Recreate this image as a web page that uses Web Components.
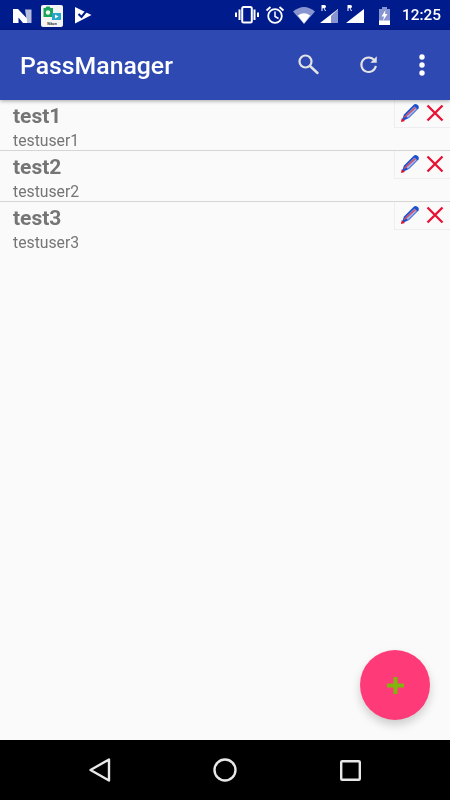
<!DOCTYPE html>
<html><head><meta charset="utf-8">
<style>
html,body{margin:0;padding:0;height:100%}
body{width:450px;height:800px;overflow:hidden;font-family:Roboto,sans-serif}
</style></head><body>
<pm-app>
<pm-status slot="status"></pm-status>
<pm-bar slot="bar" title-text="PassManager"></pm-bar>
<pm-row name="test1" user="testuser1"></pm-row>
<pm-row name="test2" user="testuser2"></pm-row>
<pm-row name="test3" user="testuser3" last></pm-row>
<pm-fab slot="fab"></pm-fab>
<pm-nav slot="nav"></pm-nav>
</pm-app>
<script>
function def(tag,html){
  customElements.define(tag,class extends HTMLElement{
    connectedCallback(){
      if(this.shadowRoot)return;
      const r=this.attachShadow({mode:'open'});
      r.innerHTML=typeof html==='function'?html(this):html;
    }
  });
}
def('pm-app',`<style>
:host{display:flex;flex-direction:column;height:800px;background:#fafafa;position:relative}
.list{flex:1;display:block;position:relative;min-height:0}
.fab{position:absolute;right:20px;bottom:80px;display:block}
</style>
<slot name="status"></slot><slot name="bar"></slot>
<div class="list"><slot></slot></div>
<div class="fab"><slot name="fab"></slot></div>
<slot name="nav"></slot>`);

def('pm-status',`<style>
:host{display:flex;align-items:center;height:30px;background:#001b8b;color:#fff;padding:0 9px 0 13px;font:500 15.400px Roboto,sans-serif;flex:none;box-sizing:border-box}
svg{display:block;flex:none}
.nikon{width:22px;height:22px;margin-left:9px;background:#f4f4f4;border-radius:2px;flex:none;position:relative;overflow:hidden;margin-top:1px}
.nikon span{position:absolute;left:0;right:0;bottom:1px;text-align:center;font:700 3.500px "Liberation Sans",sans-serif;color:#222;line-height:4px}
.sp{flex:1}
.time{margin-left:11px;line-height:30px;will-change:transform}
</style>
<svg width="19" height="16" viewBox="0 0 19 16" style="margin-top:2px"><path d="M12 1.500h6.500V15H14z" fill="#b4bbdd"/><path d="M0 5V1h5L14 10.500V15H10L5.500 9.500V15H0z" fill="#fff"/></svg>
<div class="nikon"><svg width="22" height="22" viewBox="0 0 22 22" style="position:absolute;left:0;top:0"><path d="M2.500 3h2l1-1.500h3l1 1.500h2.500V12h-9.500z" fill="#1aa35a"/><circle cx="7" cy="7.500" r="2.200" fill="#f4f4f4"/><rect x="11" y="8" width="9" height="7" fill="#27a6c9"/><path d="M14 9.500l3.500 2-3.500 2z" fill="#fff"/></svg><span>Nikon</span></div>
<svg style="margin-left:12px" width="17" height="17" viewBox="0 0 17 17" overflow="visible"><path d="M0 0L16.500 8 0 16.500z" fill="#fff"/><path d="M3.500 7l3 3L13.500 1.500" fill="none" stroke="#001b8b" stroke-width="2"/></svg>
<span class="sp"></span>
<svg width="24" height="18" viewBox="0 0 24 18" fill="none" stroke="#fff"><rect x="7.200" y="1" width="9.600" height="15.500" rx="1.500" stroke-width="2"/><path d="M4.500 3.500v10.500M1 6.500v4.500M19.500 3.500v10.500M23 6.500v4.500" stroke-width="2"/></svg>
<svg style="margin-left:6px" width="20" height="20" viewBox="0 0 20 20" fill="none" stroke="#fff"><circle cx="10" cy="11" r="6.800" stroke-width="1.800"/><path d="M10 6.500V11.500l3.500 2" stroke-width="1.500"/><path d="M1.500 5.500L5.500 2M18.500 5.500L14.500 2" stroke-width="1.800"/></svg>
<svg style="margin-left:8px" width="22" height="18" viewBox="0 0 22 18"><path d="M0 5.500Q11-3.500 22 5.500L11 18z" fill="#8794cf"/><path d="M4.800 9.600Q11 4.800 17.200 9.600L11 17.500z" fill="#fff"/></svg>
<span style="flex:none;margin-left:5px;width:18px;height:20px;position:relative;display:block"><svg width="18" height="20" viewBox="0 0 18 20" style="position:absolute;left:0;top:0"><path d="M18 4V18H0z" fill="#fff"/><path d="M18 4V18H11V11z" fill="#8794cf"/><path d="M1.500 0h3q1.500 0 1.500 1.500t-1.500 1.600L6 6H5L3.800 3.300H2.500V6h-1z" fill="#fff"/></svg></span>
<span style="flex:none;margin-left:8px;width:18px;height:20px;position:relative;display:block"><svg width="18" height="20" viewBox="0 0 18 20" style="position:absolute;left:0;top:0"><path d="M18 4V18H0z" fill="#fff"/><path d="M1.500 0h3q1.500 0 1.500 1.500t-1.500 1.600L6 6H5L3.800 3.300H2.500V6h-1z" fill="#fff"/></svg></span>
<svg style="margin-left:14px" width="13" height="19" viewBox="0 0 13 19"><path d="M1 3h3V1h5v2h3v16H1z" fill="#8794cf"/><path d="M1 14.500h11V19H1z" fill="#fff"/><path d="M7.500 4L3.500 10.500H6L5 15 9.500 8H7z" fill="#fff"/></svg>
<span class="time">12:25</span>`);

def('pm-bar',t=>`<style>
:host{display:flex;align-items:center;height:70px;background:#2f49b3;flex:none;position:relative;z-index:2;box-shadow:0 1px 4px rgba(0,0,0,.35);padding:0 0 0 20px;box-sizing:border-box;color:#fff}
h1{margin:0;font:500 24.800px/34px Roboto,sans-serif;flex:1;position:relative;top:1px;will-change:transform}
svg{display:block;flex:none}
</style>
<h1>${t.getAttribute('title-text')}</h1>
<svg width="24" height="24" viewBox="0 0 24 24" fill="none" stroke="#e4e4e4" stroke-linecap="round" style="margin-right:39px;position:relative;left:0"><circle cx="9.500" cy="8.500" r="6" stroke-width="2.200"/><path d="M14 13l7.500 7" stroke-width="2.400"/></svg>
<svg width="20" height="20" viewBox="0 0 22 22" fill="none" style="margin-right:40px;position:relative;top:-1px"><path d="M17 7A8 8 0 1 0 18.500 13" stroke="#e4e4e4" stroke-width="2.300"/><path d="M12.500 9.500L19.500 2.500V9.500z" fill="#e4e4e4"/></svg>
<svg width="6" height="22" viewBox="0 0 6 22" fill="#fff" style="margin-right:25px"><circle cx="3" cy="3" r="2.700"/><circle cx="3" cy="11" r="2.700"/><circle cx="3" cy="19" r="2.700"/></svg>`);

def('pm-row',t=>`<style>
:host{display:flex;height:51px;box-sizing:border-box;position:relative;color:#757575;${t.hasAttribute('last')?'':'border-bottom:1px solid #d5d5d5;'}}
.txt{flex:1;padding-left:13px;min-width:0;will-change:transform}
.n{font:700 21px/32px Roboto,sans-serif;height:31px}
.u{font:400 15.750px/20px Roboto,sans-serif}
.act{flex:none;display:flex;align-items:center;box-sizing:border-box;width:56px;height:28px;border-left:1px solid #eee;border-bottom:1px solid #eee;padding:0 0 1px 5px}
svg{display:block;flex:none}
</style>
<div class="txt"><div class="n">${t.getAttribute('name')}</div><div class="u">${t.getAttribute('user')}</div></div>
<div class="act">
<svg width="20" height="20" viewBox="0 0 20 20"><path d="M1.500 18.500L4 11.500 13.500 2q1.500-1.500 3.500-.5 2.500 1.500 1.500 4L9 15z" fill="#1a50d0"/><path d="M5.500 12.500L14.500 3.500 17 6 8 15z" fill="#9fb0e8"/><path d="M4 14.500L15.500 4.500" stroke="#d8485c" stroke-width="1.500"/><path d="M1 19l.8-4 3.200 3z" fill="#e0102c"/></svg>
<svg width="18" height="18" viewBox="0 0 18 18" style="margin-left:6px" fill="none" stroke="#ea1034" stroke-width="2.300"><path d="M1.500 1.500l15 15M16.500 1.500l-15 15"/></svg>
</div>`);

def('pm-fab',`<style>
:host{width:70px;height:70px;border-radius:50%;background:#fe3b78;box-shadow:0 5px 10px rgba(0,0,0,.18);display:flex;align-items:center;justify-content:center}
</style>
<svg width="17" height="17" viewBox="0 0 17 17"><path d="M6.500 0h4v6.500H17v4h-6.500V17h-4v-6.500H0v-4h6.500z" fill="#82b40e"/></svg>`);

def('pm-nav',`<style>
:host{display:flex;height:60px;background:#000;flex:none;align-items:center;justify-content:space-between;padding:0 89px;box-sizing:border-box}
svg{display:block;flex:none}
</style>
<svg width="22" height="24" viewBox="0 0 22 24" fill="none" stroke="#e8e8e8" stroke-width="2.400" stroke-linejoin="round"><path d="M1.500 12L20 1.500V22.500z"/></svg>
<svg width="24" height="24" viewBox="0 0 24 24" fill="none" stroke="#e8e8e8" stroke-width="2.400" style="margin-right:2px"><circle cx="12" cy="12" r="10.500"/></svg>
<svg width="21" height="21" viewBox="0 0 21 21" fill="none" stroke="#e8e8e8" stroke-width="2.400"><rect x="1.200" y="1.200" width="18.600" height="18.600" rx="1"/></svg>`);
</script>
</body></html>
